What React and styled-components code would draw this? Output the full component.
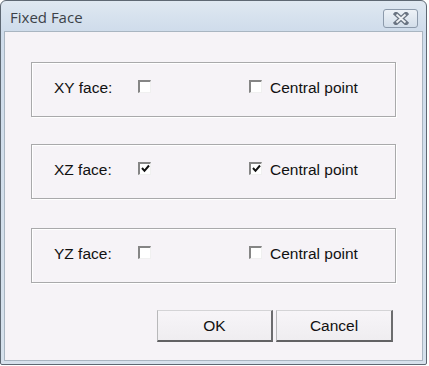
import React from "react";
import styled, { createGlobalStyle } from "styled-components";

const Global = createGlobalStyle`
  html, body { margin: 0; padding: 0; background: #ffffff; }
  * { box-sizing: border-box; }
`;

const Window = styled.div`
  width: 427px;
  height: 365px;
  border: 1px solid #5e6873;
  border-radius: 6px 6px 2px 2px;
  background: linear-gradient(#dfe8f1, #cfdceb 30px, #d6e1ec);
  display: flex;
  flex-direction: column;
  padding: 0 3px 3px 3px;
`;

const TitleBar = styled.div`
  height: 30px;
  display: flex;
  align-items: center;
  justify-content: space-between;
  padding: 0 5px 0 6px;
`;

const Title = styled.span`
  font-family: "Open Sans", "Noto Sans", sans-serif;
  font-size: 15px;
  color: #3c4248;
  margin-top: 1px;
`;

const CloseButton = styled.div`
  width: 35px;
  height: 19px;
  border: 1px solid #8c9aab;
  border-radius: 3px;
  background: linear-gradient(#edf2f7, #d3deea);
  display: flex;
  align-items: center;
  justify-content: center;
  margin-top: 4px;
`;

const Client = styled.div`
  flex: 1;
  background: #f6f3f7;
  border: 1px solid #a9b5c1;
  display: flex;
  flex-direction: column;
  padding: 30px 26px 0 26px;
`;

const Group = styled.div`
  height: 55px;
  border: 1px solid #a9a9ab;
  box-shadow: 1px 1px 0 #ffffff, inset 1px 1px 0 #ffffff;
  margin-bottom: ${(p) => p.$gap}px;
  display: grid;
  grid-template-columns: 84px 111px auto;
  align-items: center;
  align-content: start;
  padding: 14px 0 0 22px;
`;

const Label = styled.span`
  font-family: "Liberation Sans", Arial, sans-serif;
  font-size: 15.5px;
  color: #111111;
  line-height: 14px;
  padding-top: 4px;
`;

const CheckWrap = styled.span`
  display: inline-flex;
  align-items: center;
  gap: 8px;
`;

const Box = styled.span`
  width: 13px;
  height: 13px;
  flex: none;
  border-top: 2px solid #858585;
  border-left: 2px solid #858585;
  border-right: 1px solid #f0f0f0;
  border-bottom: 1px solid #f0f0f0;
  background: #ffffff;
  display: inline-flex;
  align-items: center;
  justify-content: center;
`;

const Buttons = styled.div`
  display: flex;
  justify-content: flex-end;
  gap: 3px;
  margin-top: 27px;
  padding-right: 3px;
`;

const Button = styled.div`
  width: ${(p) => p.$w}px;
  height: 32px;
  border-top: 1px solid #d4d4d6;
  border-left: 1px solid #b8b8ba;
  border-right: 2px solid #6c6c6e;
  border-bottom: 2px solid #626264;
  background: linear-gradient(#f7f5f8, #efedf0);
  display: flex;
  align-items: center;
  justify-content: center;
  padding-top: 1px;
  font-family: "Liberation Sans", Arial, sans-serif;
  font-size: 15.5px;
  color: #111111;
`;

const Check = ({ checked }) => (
  <Box>
    {checked && (
      <svg width="9" height="9" viewBox="0 0 9 9">
        <path d="M1 4 L3.5 6.8 L8 1.5" fill="none" stroke="#111" strokeWidth="2" />
      </svg>
    )}
  </Box>
);

const rows = [
  { label: "XY face:", checked: false, gap: 27 },
  { label: "XZ face:", checked: true, gap: 29 },
  { label: "YZ face:", checked: false, gap: 0 },
];

export default function App() {
  return (
    <>
      <Global />
      <Window>
        <TitleBar>
          <Title>Fixed Face</Title>
          <CloseButton>
            <svg width="16" height="13" viewBox="0 0 16 13">
              <path
                d="M3 2 L13 11 M13 2 L3 11"
                stroke="#6a7482"
                strokeWidth="4.4"
                strokeLinecap="square"
                fill="none"
              />
              <path
                d="M3.5 2.5 L12.5 10.5 M12.5 2.5 L3.5 10.5"
                stroke="#eef1f4"
                strokeWidth="1.8"
                fill="none"
              />
            </svg>
          </CloseButton>
        </TitleBar>
        <Client>
          {rows.map((r) => (
            <Group key={r.label} $gap={r.gap}>
              <Label>{r.label}</Label>
              <Check checked={r.checked} />
              <CheckWrap>
                <Check checked={r.checked} />
                <Label>Central point</Label>
              </CheckWrap>
            </Group>
          ))}
          <Buttons>
            <Button $w={116}>OK</Button>
            <Button $w={117}>Cancel</Button>
          </Buttons>
        </Client>
      </Window>
    </>
  );
}
